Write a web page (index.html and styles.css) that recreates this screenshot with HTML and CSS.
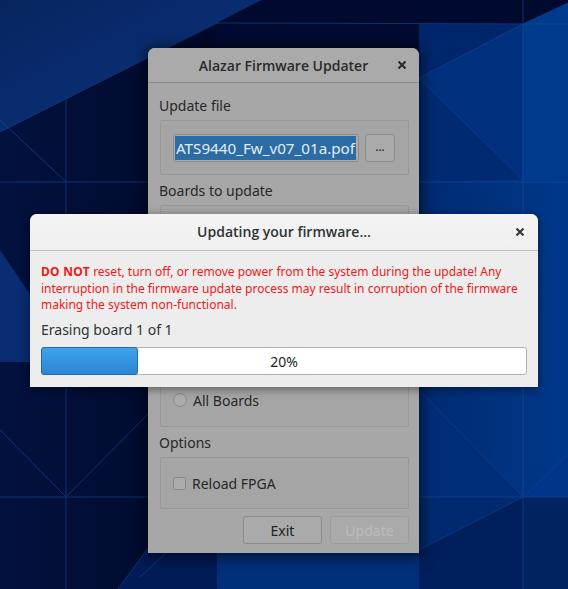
FILE: index.html
```html
<!DOCTYPE html>
<html>
<head>
<meta charset="utf-8">
<link rel="stylesheet" href="styles.css">
</head>
<body>
<div class="desktop">
  <svg class="wallpaper" width="568" height="589" viewBox="0 0 568 589">
    <defs>
      <linearGradient id="gTL" x1="0" y1="0" x2="1" y2="1">
        <stop offset="0" stop-color="#07245f"/>
        <stop offset="1" stop-color="#0c3580"/>
      </linearGradient>
      <linearGradient id="gL" x1="0" y1="0" x2="1" y2="0">
        <stop offset="0" stop-color="#03113f"/>
        <stop offset="1" stop-color="#000929"/>
      </linearGradient>
      <linearGradient id="gR" x1="0" y1="0" x2="1" y2="0">
        <stop offset="0" stop-color="#002a72"/>
        <stop offset="1" stop-color="#00388a"/>
      </linearGradient>
    </defs>
    <rect x="0" y="0" width="568" height="589" fill="#000a30"/>
    <polygon points="0,0 262,0 217,23 0,132" fill="url(#gTL)"/>
    <polygon points="262,0 568,0 568,3 523,24 217,23" fill="#010a2e"/>
    <polygon points="0,132 217,23 217,589 0,589" fill="url(#gL)"/>
    <polygon points="0,250 34,300 34,362 0,362" fill="#0a2c70"/>
    <polygon points="118,589 160,532 217,553 217,589" fill="#001b58"/>
    <polygon points="217,553 420,553 420,589 217,589" fill="#00307a"/>
    <polygon points="419,0 568,0 568,3 523,24 419,24" fill="#000a2e"/>
    <polygon points="523,24 568,3 568,180 523,180" fill="#003a8c"/>
    <polygon points="419,24 523,24 419,78" fill="#00266a"/>
    <polygon points="419,78 523,24 523,180" fill="#00307e"/>
    <polygon points="419,78 523,180 419,180" fill="#002a72"/>
    <polygon points="419,180 568,180 568,455 523,497 419,390" fill="url(#gR)"/>
    <polygon points="419,390 523,497 419,497" fill="#002d78"/>
    <polygon points="419,497 523,497 419,550" fill="#002a70"/>
    <polygon points="419,550 523,497 523,589 419,589" fill="#001f5c"/>
    <polygon points="523,497 568,455 568,497" fill="#00358a"/>
    <polygon points="523,497 568,497 568,589 523,589" fill="#00245f"/>
    <g stroke="#1c4fa6" stroke-width="1" fill="none" opacity="0.55">
      <line x1="0" y1="132" x2="217" y2="23"/>
      <line x1="217" y1="23" x2="568" y2="24"/>
      <line x1="523" y1="24" x2="568" y2="3"/>
      <line x1="523" y1="24" x2="419" y2="78"/>
      <line x1="419" y1="78" x2="523" y2="180"/>
      <line x1="523" y1="0" x2="523" y2="589"/>
      <line x1="0" y1="182" x2="568" y2="182"/>
      <line x1="66" y1="98" x2="66" y2="589"/>
      <line x1="0" y1="497" x2="568" y2="497"/>
      <line x1="0" y1="430" x2="66" y2="497"/>
      <line x1="66" y1="497" x2="148" y2="414"/>
      <line x1="419" y1="390" x2="523" y2="497"/>
      <line x1="523" y1="497" x2="568" y2="455"/>
      <line x1="419" y1="550" x2="523" y2="497"/>
      <line x1="118" y1="589" x2="160" y2="532"/>
      <line x1="140" y1="577" x2="166" y2="553"/>
      <line x1="0" y1="120" x2="66" y2="182"/>
    </g>
  </svg>

  <div class="window main">
    <div class="titlebar">
      <span></span>
      <span class="title">Alazar Firmware Updater</span>
      <span class="close"><svg width="10" height="10" viewBox="0 0 10 10"><path d="M1.5 1.5l7 7M8.5 1.5l-7 7" stroke="#2a2a2a" stroke-width="2"/></svg></span>
    </div>
    <div class="content">
      <div class="label">Update file</div>
      <div class="frame file-frame">
        <div class="entry"><span class="sel">ATS9440_Fw_v07_01a.pof</span></div>
        <div class="btn small">...</div>
      </div>
      <div class="label gap">Boards to update</div>
      <div class="frame boards-frame">
        <div class="row"><span class="radio"></span>All Boards</div>
      </div>
      <div class="label gap">Options</div>
      <div class="frame options-frame">
        <div class="row"><span class="checkbox"></span>Reload FPGA</div>
      </div>
      <div class="actions">
        <div class="btn">Exit</div>
        <div class="btn disabled">Update</div>
      </div>
    </div>
  </div>

  <div class="window dialog">
    <div class="titlebar">
      <span></span>
      <span class="title">Updating your firmware...</span>
      <span class="close"><svg width="10" height="10" viewBox="0 0 10 10"><path d="M1.5 1.5l7 7M8.5 1.5l-7 7" stroke="#2e3436" stroke-width="2"/></svg></span>
    </div>
    <div class="dialog-body">
      <p class="warning"><b>DO NOT</b> reset, turn off, or remove power from the system during the update! Any<br>interruption in the firmware update process may result in corruption of the firmware<br>making the system non-functional.</p>
      <div class="status">Erasing board 1 of 1</div>
      <div class="progress">
        <div class="fill" style="width:20%"></div>
        <span class="pct">20%</span>
      </div>
    </div>
  </div>
</div>
</body>
</html>
```

FILE: styles.css
```css
* { box-sizing: border-box; }
html, body { margin: 0; padding: 0; }
body {
  font-family: "Noto Sans", "DejaVu Sans", sans-serif;
  width: 568px;
  height: 589px;
  overflow: hidden;
}
.desktop {
  position: relative;
  width: 568px;
  height: 589px;
  overflow: hidden;
  background: #000a30;
}
.wallpaper { position: absolute; left: 0; top: 0; display: block; }

.window { position: absolute; }

/* main (dimmed) window */
.main {
  left: 148px;
  top: 48px;
  width: 271px;
  height: 505px;
  background: #a7a7a7;
  border-radius: 7px 7px 0 0;
  box-shadow: 0 2px 14px 3px rgba(0, 0, 0, 0.55);
  display: flex;
  flex-direction: column;
  color: #282828;
}
.titlebar {
  display: grid;
  grid-template-columns: 1fr auto 1fr;
  align-items: center;
  border-radius: 7px 7px 0 0;
}
.main .titlebar {
  height: 35px;
  background: #aaaaaa;
  border-bottom: 1px solid #8b8b8b;
  padding: 0 12px;
}
.title {
  font-family: "Open Sans", "Noto Sans", sans-serif;
  font-weight: 600;
  font-size: 14px;
  white-space: nowrap;
}
.main .title { color: #2b2b2b; }
.close { justify-self: end; display: flex; }

.content {
  display: flex;
  flex-direction: column;
  padding: 13px 10px 9px 12px;
}
.label {
  height: 20px;
  line-height: 20px;
  font-size: 14px;
  margin-left: -1px;
  margin-bottom: 4px;
  white-space: nowrap;
}
.label.gap { margin-top: 6px; }
.frame {
  border: 1px solid #989898;
  border-radius: 2px;
  background: #a5a5a5;
}
.file-frame {
  height: 55px;
  display: flex;
  align-items: center;
  gap: 6px;
  padding-left: 12px;
}
.entry {
  width: 186px;
  height: 28px;
  border: 1px solid #8c8c8c;
  border-radius: 3px;
  background: #ababab;
  padding: 1px 2px 1px 1px;
  display: flex;
  overflow: hidden;
}
.sel {
  display: block;
  flex: 1;
  text-align: right;
  background: #2b6ca4;
  color: #e4edf5;
  font-size: 15.2px;
  line-height: 24px;
  height: 24px;
  white-space: nowrap;
  padding-right: 1px;
}
.btn {
  width: 79px;
  height: 28px;
  border: 1px solid #8c8c8c;
  border-radius: 3px;
  background: #aaaaaa;
  display: flex;
  align-items: center;
  justify-content: center;
  font-size: 14px;
  color: #232323;
}
.btn.small { width: 30px; font-size: 12px; padding-bottom: 3px; }
.btn.disabled { color: #bcbcbc; border-color: #9c9c9c; }

.boards-frame {
  height: 222px;
  display: flex;
  flex-direction: column;
  justify-content: flex-end;
  padding: 0 0 16px 12px;
}
.options-frame {
  height: 52px;
  display: flex;
  align-items: center;
  padding-left: 12px;
}
.row {
  display: flex;
  align-items: center;
  gap: 6px;
  height: 20px;
  font-size: 14px;
}
.radio {
  width: 14px;
  height: 14px;
  border-radius: 50%;
  border: 1px solid #8a8a8a;
  background: #acacac;
}
.checkbox {
  width: 13px;
  height: 13px;
  border-radius: 2px;
  border: 1px solid #8a8a8a;
  background: #acacac;
}
.actions {
  margin-top: 7px;
  display: flex;
  justify-content: flex-end;
  gap: 8px;
}

/* progress dialog */
.dialog {
  left: 30px;
  top: 214px;
  width: 508px;
  height: 173px;
  background: #ededed;
  border-radius: 7px 7px 0 0;
  box-shadow: 0 2px 10px rgba(0, 0, 0, 0.45);
  display: flex;
  flex-direction: column;
  color: #2e3436;
}
.dialog .titlebar {
  height: 37px;
  background: linear-gradient(#f4f4f4, #efefef);
  border-bottom: 1px solid #bfbfbf;
  padding: 0 13px;
}
.dialog-body {
  padding: 13px 11px 12px 11px;
  display: flex;
  flex-direction: column;
}
.warning {
  margin: 0;
  color: #f21818;
  font-size: 12px;
  line-height: 16.7px;
  white-space: nowrap;
}
.warning b { font-weight: 700; letter-spacing: 0.3px; }
.status {
  margin-top: 6px;
  height: 20px;
  line-height: 20px;
  font-size: 14px;
}
.progress {
  margin-top: 7px;
  height: 28px;
  border: 1px solid #b4b4b1;
  border-radius: 3px;
  background: #ffffff;
  display: flex;
  align-items: center;
  position: relative;
}
.fill {
  align-self: stretch;
  margin: -1px 0 -1px -1px;
  background: linear-gradient(#3ea2ec, #2c85d2);
  border: 1px solid #1f6aaa;
  border-radius: 3px;
}
.pct {
  position: absolute;
  left: 0;
  right: 0;
  text-align: center;
  font-size: 14px;
  color: #1e1e1e;
}
```
